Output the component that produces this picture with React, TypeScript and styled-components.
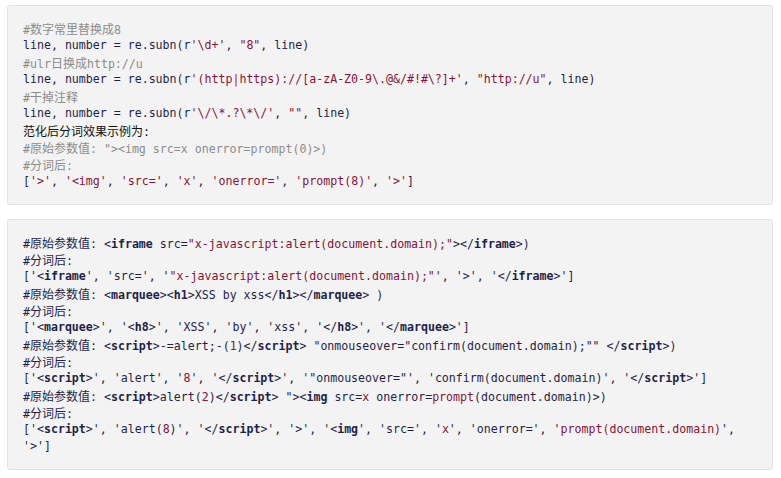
import React from "react";
import styled, { createGlobalStyle } from "styled-components";

const Global = createGlobalStyle`
  html, body { margin: 0; padding: 0; background: #ffffff; }
  body { font-family: "DejaVu Sans Mono", "Noto Sans CJK SC", monospace; }
`;

const Page = styled.div`
  display: flex;
  flex-direction: column;
  gap: 14px;
  padding: 5px 8px 0 7px;
`;

const CodeBlock = styled.pre`
  margin: 0;
  padding: 14px 15px;
  background: #f3f3f3;
  border: 1px solid #e2e2e2;
  border-radius: 3px;
  font-family: "DejaVu Sans Mono", monospace;
  font-size: 11.6px;
  line-height: 17px;
  color: #1f1f4a;
  white-space: pre;
  overflow: hidden;
`;

const Line = styled.div`
  height: 17px;
  white-space: pre;
`;

type Kind = "p" | "s" | "c" | "t" | "k" | "b";

const Seg = styled.span<{ $kind: Kind }>`
  color: ${(p) =>
    p.$kind === "s"
      ? "#861438"
      : p.$kind === "c"
      ? "#8c8c8c"
      : p.$kind === "k"
      ? "#b0105a"
      : p.$kind === "b"
      ? "#111111"
      : "#1f1f4a"};
  font-weight: ${(p) => (p.$kind === "t" ? 700 : 400)};
`;

const Cn = styled.span`
  font-family: "Noto Sans CJK SC", "Microsoft YaHei", sans-serif;
  font-size: 12px;
`;

type Token = [Kind, string];

const CJK = /([\u3000-\u9fff\uff00-\uffef]+)/;

function renderText(text: string) {
  return text.split(CJK).map((part, i) =>
    i % 2 === 1 ? <Cn key={i}>{part}</Cn> : part
  );
}

const block1: Token[][] = [
  [["c", "#数字常里替换成8"]],
  [["p", "line, number = re.subn(r"], ["s", "'\\d+'"], ["p", ", "], ["s", '"8"'], ["p", ", line)"]],
  [["c", "#ulr日换成http://u"]],
  [
    ["p", "line, number = re.subn(r"],
    ["s", "'(http"],
    ["k", "|"],
    ["s", "https)://[a-zA-Z0-9\\.@&/#!#\\?]+'"],
    ["p", ", "],
    ["s", '"http://u"'],
    ["p", ", line)"],
  ],
  [["c", "#干掉注释"]],
  [["p", "line, number = re.subn(r"], ["s", "'\\/\\*.?\\*\\/'"], ["p", ", "], ["s", '""'], ["p", ", line)"]],
  [["b", "范化后分词效果示例为:"]],
  [["c", '#原始参数值: "><img src=x onerror=prompt(0)>)']],
  [["c", "#分词后:"]],
  [
    ["p", "["], ["s", "'>'"], ["p", ", "], ["s", "'<img'"], ["p", ", "], ["s", "'src='"], ["p", ", "],
    ["s", "'x'"], ["p", ", "], ["s", "'onerror='"], ["p", ", "], ["s", "'prompt(8)'"], ["p", ", "],
    ["s", "'>'"], ["p", "]"],
  ],
];

const block2: Token[][] = [
  [
    ["p", "#原始参数值: <"], ["t", "iframe"], ["p", " src="],
    ["s", '"x-javascript:alert(document.domain);"'], ["p", "></"], ["t", "iframe"], ["p", ">)"],
  ],
  [["p", "#分词后:"]],
  [
    ["p", "['<"], ["t", "iframe"], ["p", "', 'src=', '"],
    ["s", '"x-javascript:alert(document.domain);"'], ["p", "', '>', '</"], ["t", "iframe"], ["p", ">']"],
  ],
  [
    ["p", "#原始参数值: <"], ["t", "marquee"], ["p", "><"], ["t", "h1"], ["p", ">XSS by xss</"],
    ["t", "h1"], ["p", "></"], ["t", "marquee"], ["p", "> )"],
  ],
  [["p", "#分词后:"]],
  [
    ["p", "['<"], ["t", "marquee"], ["p", ">', '<"], ["t", "h8"], ["p", ">', 'XSS', 'by', 'xss', '</"],
    ["t", "h8"], ["p", ">', '</"], ["t", "marquee"], ["p", ">']"],
  ],
  [
    ["p", "#原始参数值: <"], ["t", "script"], ["p", ">-=alert;-("], ["s", "1"], ["p", ")</"],
    ["t", "script"], ["p", '> "onmouseover="confirm(document.domain);"" </'], ["t", "script"], ["p", ">)"],
  ],
  [["p", "#分词后:"]],
  [
    ["p", "['<"], ["t", "script"], ["p", ">', 'alert', '"], ["s", "8"], ["p", "', '</"], ["t", "script"],
    ["p", ">', '\"onmouseover=\"', 'confirm(document.domain)', '</"], ["t", "script"], ["p", ">']"],
  ],
  [
    ["p", "#原始参数值: <"], ["t", "script"], ["p", ">alert("], ["s", "2"], ["p", ")</"], ["t", "script"],
    ["p", '> "><'], ["t", "img"], ["p", " src="], ["s", "x"], ["p", " onerror="], ["s", "prompt"],
    ["p", "(document.domain)>)"],
  ],
  [["p", "#分词后:"]],
  [
    ["p", "['<"], ["t", "script"], ["p", ">', 'alert("], ["s", "8"], ["p", ")', '</"], ["t", "script"],
    ["p", ">', '>', '<"], ["t", "img"], ["p", "', 'src=', '"], ["s", "x"], ["p", "', 'onerror=', '"],
    ["s", "prompt(document.domain)"], ["p", "',"],
  ],
  [["p", "'>']"]],
];

function Code({ lines }: { lines: Token[][] }) {
  return (
    <CodeBlock>
      {lines.map((line, i) => (
        <Line key={i}>
          {line.map(([kind, text], j) => (
            <Seg key={j} $kind={kind}>
              {renderText(text)}
            </Seg>
          ))}
        </Line>
      ))}
    </CodeBlock>
  );
}

export default function App() {
  return (
    <>
      <Global />
      <Page>
        <Code lines={block1} />
        <Code lines={block2} />
      </Page>
    </>
  );
}
